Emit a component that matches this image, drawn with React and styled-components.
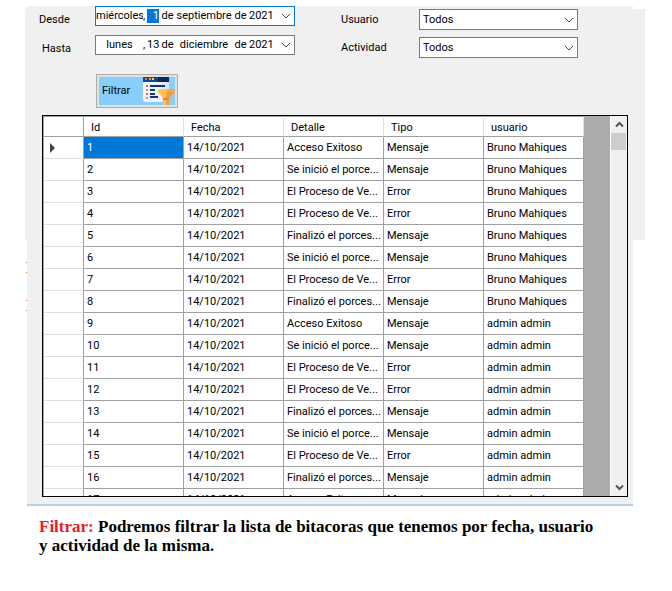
import React from "react";
import styled, { createGlobalStyle } from "styled-components";

const GlobalStyle = createGlobalStyle`
  *, *::before, *::after { box-sizing: border-box; }
  body { margin: 0; background: #fff; color: #000; }
  body, input, button, select {
    font-family: Roboto, "Liberation Sans", Arial, sans-serif;
    font-size: 11px;
    line-height: 14px;
  }
`;

const Page = styled.main`
  padding: 6px 39px 0 27px;
`;

const Window = styled.section`
  position: relative;
  isolation: isolate;
  padding: 0 5px 7px 12px;
  background: #f0f0f0;
  border-bottom: 2px solid #b8d0ec;
`;

const Backdrop = styled.div`
  position: absolute;
  z-index: -1;
  top: 3px;
  left: -2px;
  right: -12px;
  height: 231px;
  background: #f0f0f0;
`;

const EdgeMarks = styled.svg`
  position: absolute;
  top: 256px;
  left: -1px;
`;

const Filters = styled.form`
  display: grid;
  grid-template-columns: 56px 200px 46px 78px 159px;
  align-items: start;
  height: 109px;
`;

const Fields = styled.div`
  display: grid;
  gap: ${(p) => p.$gap};
  padding-top: ${(p) => p.$top};
`;

const Label = styled.label`
  height: 20px;
  line-height: 20px;
  padding-left: ${(p) => p.$indent || "0"};
`;

const DateBox = styled.div`
  display: flex;
  align-items: center;
  height: 20px;
  padding: 0 3px 0 0;
  background: #fff;
  border: 1px solid ${(p) => (p.$active ? "#0078d7" : "#7a7a7a")};
`;

const Segment = styled.input`
  width: ${(p) => p.$width};
  height: 14px;
  padding: 0;
  border: 0;
  outline: 0;
  text-align: ${(p) => p.$align || "center"};
  color: ${(p) => (p.$selected ? "#fff" : "#000")};
  background: ${(p) => (p.$selected ? "#0078d7" : "transparent")};
`;

const Sep = styled.span`
  width: ${(p) => p.$width};
  text-align: ${(p) => p.$align || "center"};
`;

const DropButton = styled.button`
  display: flex;
  margin-left: auto;
  padding: 0;
  border: 0;
  background: none;
`;

const Combo = styled.div`
  display: grid;
  align-items: center;
`;

const Select = styled.select`
  grid-area: 1 / 1;
  appearance: none;
  width: 100%;
  height: 21px;
  padding: 0 20px 0 3px;
  color: #000;
  background: #fff;
  border: 1px solid #7a7a7a;
  border-radius: 0;
`;

const ComboArrow = styled.span`
  grid-area: 1 / 1;
  display: flex;
  justify-self: end;
  padding-right: 4px;
  pointer-events: none;
`;

const FilterButton = styled.button`
  display: flex;
  align-items: center;
  justify-content: space-between;
  width: 82px;
  height: 34px;
  margin: 10px 0 0 1px;
  padding: 0 1px 0 5px;
  color: #000;
  background: #87cefa;
  border: 1px solid #adadad;
  box-shadow: inset 0 0 0 2px #e1e1e1;
`;

const Grid = styled.div`
  display: flex;
  height: 382px;
  margin-left: 3px;
  overflow: hidden;
  background: #ababab;
  border: 1px solid #000;
`;

const Table = styled.table`
  flex: none;
  width: 541px;
  table-layout: fixed;
  border-collapse: separate;
  border-spacing: 0;
  background: #fff;
  border-left: 1px solid #a0a0a0;
  align-self: flex-start;
`;

const ColumnHead = styled.th`
  width: ${(p) => p.$width};
  height: 21px;
  padding: 2px 7px 0;
  font-weight: normal;
  text-align: left;
  border-top: 1px solid #a0a0a0;
  border-bottom: 1px solid #a0a0a0;
  border-right: 1px solid ${(p) => (p.$corner ? "#a0a0a0" : "#e0e0e0")};
`;

const RowHead = styled.th`
  height: 22px;
  padding: 0 0 0 6px;
  border-right: 1px solid #a0a0a0;
  border-bottom: 1px solid #e0e0e0;
  svg { display: block; }
`;

const Cell = styled.td`
  height: 22px;
  padding: 0 3px;
  white-space: nowrap;
  color: ${(p) => (p.$selected ? "#fff" : "#000")};
  background: ${(p) => (p.$selected ? "#0078d7" : "#fff")};
  border-right: 1px solid #a0a0a0;
  border-bottom: 1px solid #a0a0a0;
`;

const ScrollBar = styled.div`
  display: flex;
  flex-direction: column;
  width: 17px;
  margin-left: auto;
  background: #f0f0f0;
  border-left: 1px solid #fff;
`;

const ScrollButton = styled.button`
  display: grid;
  place-items: center;
  height: 17px;
  padding: 0;
  border: 0;
  background: none;
`;

const Thumb = styled.div`
  height: 17px;
  margin-right: 1px;
  background: #cdcdcd;
`;

const Spacer = styled.div`
  flex: 1;
`;

const Caption = styled.p`
  margin: 0;
  padding: 11px 0 0 12px;
  font: bold 17px/19px "Liberation Serif", "Times New Roman", serif;
`;

const Term = styled.span`
  color: #ed1c24;
`;

const Chevron = () => (
  <svg width="10" height="6" viewBox="0 0 10 6" fill="none" stroke="#4a4a4a" aria-hidden="true">
    <path d="M1 1l4 4 4-4" />
  </svg>
);

const ScrollArrow = ({ up }) => (
  <svg width="9" height="7" viewBox="0 0 9 7" fill="none" stroke="#555" strokeWidth="2" aria-hidden="true">
    <path d={up ? "M1 5.5L4.5 2 8 5.5" : "M1 1.5L4.5 5 8 1.5"} />
  </svg>
);

const FilterIcon = () => (
  <svg width="34" height="28" viewBox="0 0 34 28" aria-hidden="true">
    <path d="M1 0h26v25H4a3 3 0 0 1-3-3z" fill="#f1f3fc" />
    <path d="M20 5h7v20h-7z" fill="#dfe3f5" />
    <path d="M1 0h26v5H1z" fill="#0d4a93" />
    <path d="M16 0h11v5H16z" fill="#082b5c" />
    <path d="M3 1h2v2H3z" fill="#ef6b3a" />
    <path d="M7 1h2v2H7z" fill="#f39a3a" />
    <path d="M10 1h2v2h-2z" fill="#ffd45a" />
    <path d="M4 8h2v2H4zM4 16h2v2H4z" fill="#ef6b3a" />
    <path d="M4 12h2v2H4zM4 20h2v2H4z" fill="#f0894d" />
    <path d="M8 8h15v2H8zM8 12h5v2H8zM8 16h5v2H8zM8 19h8v2H8z" fill="#0d3b79" />
    <path d="M16 12h17v3l-6 6v7h-6v-7l-5-6z" fill="#ffc34d" />
    <path d="M25 12h8v3l-6 6v7h-3v-8z" fill="#f2a03f" />
    <path d="M16 12h17v3H16z" fill="#ffc85c" />
    <path d="M25 12h8v3h-8z" fill="#f5a846" />
    <path d="M21 21h6v2h-6z" fill="#e9853b" />
  </svg>
);

const DatePicker = ({ id, active, weekday, day, month, year }) => (
  <DateBox $active={active}>
    <Segment id={id} $width="47px" defaultValue={weekday} />
    <Sep $width="4px" $align="left">,</Sep>
    <Segment aria-label="Día" $width="12px" $align="right" $selected={active} defaultValue={day} />
    <Sep $width="17px">de</Sep>
    <Segment aria-label="Mes" $width="56px" defaultValue={month} />
    <Sep $width="17px">de</Sep>
    <Segment aria-label="Año" $width="26px" $align="left" defaultValue={year} />
    <DropButton type="button" aria-label="Abrir calendario"><Chevron /></DropButton>
  </DateBox>
);

const ComboBox = ({ id }) => (
  <Combo>
    <Select id={id} defaultValue="Todos">
      <option>Todos</option>
    </Select>
    <ComboArrow><Chevron /></ComboArrow>
  </Combo>
);

const START = ["Se inició el porce...", "Mensaje"];
const CHECK = ["El Proceso de Ve...", "Error"];
const END = ["Finalizó el porces...", "Mensaje"];
const LOGIN = ["Acceso Exitoso", "Mensaje"];
const CYCLE = [LOGIN, START, CHECK, CHECK, END, START, CHECK, END];
const ROWS = [
  ...CYCLE.map((entry) => [...entry, "Bruno Mahiques"]),
  ...[...CYCLE.slice(0, 4), END, START, CHECK, END, LOGIN].map((entry) => [...entry, "admin admin"]),
];
const COLUMNS = ["Id", "Fecha", "Detalle", "Tipo", "usuario"];

export default function App() {
  return (
    <>
      <GlobalStyle />
      <Page>
        <Window>
          <Backdrop />
          <EdgeMarks width="1" height="50" aria-hidden="true">
            <path d="M0 0h1v1H0zM0 10h1v1H0zM0 38h1v1H0zM0 48h1v1H0z" fill="#f47a30" />
          </EdgeMarks>
          <Filters onSubmit={(e) => e.preventDefault()}>
            <Fields $gap="9px" $top="4px">
              <Label htmlFor="desde">Desde</Label>
              <Label htmlFor="hasta" $indent="3px">Hasta</Label>
            </Fields>
            <Fields $gap="9px" $top="0">
              <DatePicker id="desde" active weekday="miércoles" day="1" month="septiembre" year="2021" />
              <DatePicker id="hasta" weekday="lunes" day="13" month="diciembre" year="2021" />
              <div>
                <FilterButton type="submit">Filtrar<FilterIcon /></FilterButton>
              </div>
            </Fields>
            <span />
            <Fields $gap="8px" $top="4px">
              <Label htmlFor="usuario">Usuario</Label>
              <Label htmlFor="actividad">Actividad</Label>
            </Fields>
            <Fields $gap="7px" $top="3px">
              <ComboBox id="usuario" />
              <ComboBox id="actividad" />
            </Fields>
          </Filters>
          <Grid>
            <Table>
              <thead>
                <tr>
                  <ColumnHead $width="40px" $corner />
                  {COLUMNS.map((name) => (
                    <ColumnHead key={name} $width="100px">{name}</ColumnHead>
                  ))}
                </tr>
              </thead>
              <tbody>
                {ROWS.map(([detail, type, user], i) => (
                  <tr key={i}>
                    <RowHead>
                      {i === 0 && (
                        <svg width="6" height="10" viewBox="0 0 6 10" aria-hidden="true">
                          <path d="M0 0l5 5-5 5z" fill="#444" />
                        </svg>
                      )}
                    </RowHead>
                    <Cell $selected={i === 0}>{i + 1}</Cell>
                    <Cell>14/10/2021</Cell>
                    <Cell>{detail}</Cell>
                    <Cell>{type}</Cell>
                    <Cell>{user}</Cell>
                  </tr>
                ))}
              </tbody>
            </Table>
            <ScrollBar>
              <ScrollButton type="button" aria-label="Subir"><ScrollArrow up /></ScrollButton>
              <Thumb />
              <Spacer />
              <ScrollButton type="button" aria-label="Bajar"><ScrollArrow /></ScrollButton>
            </ScrollBar>
          </Grid>
        </Window>
        <Caption>
          <Term>Filtrar:</Term> Podremos filtrar la lista de bitacoras que tenemos por fecha, usuario{" "}
          {"y\u00a0actividad"} de la misma.
        </Caption>
      </Page>
    </>
  );
}
